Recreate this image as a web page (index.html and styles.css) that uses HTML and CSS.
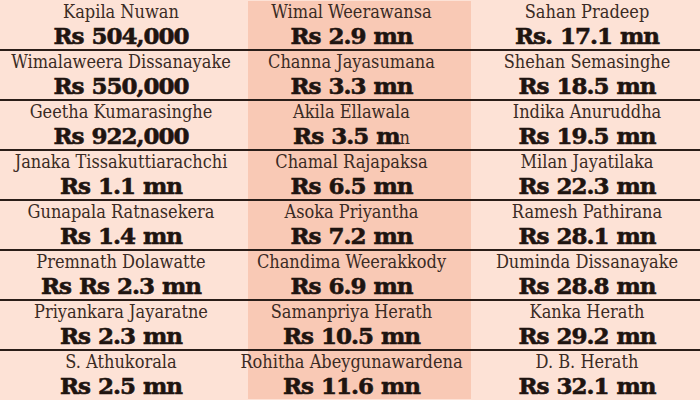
FILE: index.html
```html
<!DOCTYPE html>
<html>
<head>
<meta charset="utf-8">
<link rel="stylesheet" href="styles.css">
</head>
<body>
<div class="table">
  <div class="row">
    <div class="cell c1"><div class="name">Kapila Nuwan</div><div class="val">Rs 504,000</div></div>
    <div class="cell c2"><div class="name">Wimal Weerawansa</div><div class="val">Rs 2.9 mn</div></div>
    <div class="cell c3"><div class="name">Sahan Pradeep</div><div class="val">Rs. 17.1 mn</div></div>
  </div>
  <div class="row">
    <div class="cell c1"><div class="name">Wimalaweera Dissanayake</div><div class="val">Rs 550,000</div></div>
    <div class="cell c2"><div class="name">Channa Jayasumana</div><div class="val">Rs 3.3 mn</div></div>
    <div class="cell c3"><div class="name">Shehan Semasinghe</div><div class="val">Rs 18.5 mn</div></div>
  </div>
  <div class="row">
    <div class="cell c1"><div class="name">Geetha Kumarasinghe</div><div class="val">Rs 922,000</div></div>
    <div class="cell c2"><div class="name">Akila Ellawala</div><div class="val">Rs 3.5 m<span class="thin">n</span></div></div>
    <div class="cell c3"><div class="name">Indika Anuruddha</div><div class="val">Rs 19.5 mn</div></div>
  </div>
  <div class="row">
    <div class="cell c1"><div class="name">Janaka Tissakuttiarachchi</div><div class="val">Rs 1.1 mn</div></div>
    <div class="cell c2"><div class="name">Chamal Rajapaksa</div><div class="val">Rs 6.5 mn</div></div>
    <div class="cell c3"><div class="name">Milan Jayatilaka</div><div class="val">Rs 22.3 mn</div></div>
  </div>
  <div class="row">
    <div class="cell c1"><div class="name">Gunapala Ratnasekera</div><div class="val">Rs 1.4 mn</div></div>
    <div class="cell c2"><div class="name">Asoka Priyantha</div><div class="val">Rs 7.2 mn</div></div>
    <div class="cell c3"><div class="name">Ramesh Pathirana</div><div class="val">Rs 28.1 mn</div></div>
  </div>
  <div class="row">
    <div class="cell c1"><div class="name">Premnath Dolawatte</div><div class="val">Rs Rs 2.3 mn</div></div>
    <div class="cell c2"><div class="name">Chandima Weerakkody</div><div class="val">Rs 6.9 mn</div></div>
    <div class="cell c3"><div class="name">Duminda Dissanayake</div><div class="val">Rs 28.8 mn</div></div>
  </div>
  <div class="row">
    <div class="cell c1"><div class="name">Priyankara Jayaratne</div><div class="val">Rs 2.3 mn</div></div>
    <div class="cell c2"><div class="name">Samanpriya Herath</div><div class="val">Rs 10.5 mn</div></div>
    <div class="cell c3"><div class="name">Kanka Herath</div><div class="val">Rs 29.2 mn</div></div>
  </div>
  <div class="row last">
    <div class="cell c1"><div class="name">S. Athukorala</div><div class="val">Rs 2.5 mn</div></div>
    <div class="cell c2"><div class="name">Rohitha Abeygunawardena</div><div class="val">Rs 11.6 mn</div></div>
    <div class="cell c3"><div class="name">D. B. Herath</div><div class="val">Rs 32.1 mn</div></div>
  </div>
</div>
</body>
</html>
```
FILE: styles.css
```css
html, body {
  margin: 0;
  padding: 0;
  width: 700px;
  height: 400px;
  overflow: hidden;
  background: #fde2d6;
}
.table {
  display: flex;
  flex-direction: column;
  padding-top: 1px;
}
.row {
  display: grid;
  grid-template-columns: 248px 223px 229px;
  grid-template-rows: 48px;
  height: 50px;
  flex: none;
  box-sizing: border-box;
  border-bottom: 2px solid #2a1d18;
  overflow: hidden;
}
.row.last {
  border-bottom: none;
}
.cell {
  display: flex;
  flex-direction: column;
  align-items: center;
  color: #2a1d18;
  white-space: nowrap;
  overflow: visible;
  box-sizing: border-box;
}
.c1 { background: #fde2d6; padding-right: 6px; }
.c2 { background: #f9c9b5; padding-right: 16px; }
.c3 { background: #fde2d6; padding-left: 3px; }
.name {
  font-family: "DejaVu Serif", serif;
  font-stretch: condensed;
  font-size: 18px;
  line-height: 22px;
  height: 22px;
  color: #3a2b24;
}
.val {
  font-family: "DejaVu Serif", serif;
  font-weight: bold;
  font-size: 23px;
  line-height: 26px;
  height: 26px;
  letter-spacing: -1px;
  word-spacing: 1px;
  color: #1e1410;
  -webkit-text-stroke: 0.6px #1e1410;
}
.thin {
  font-weight: normal;
  font-stretch: condensed;
  font-size: 18px;
  line-height: 0;
  letter-spacing: 0;
  -webkit-text-stroke: 0;
  color: #3a2b24;
}
```
